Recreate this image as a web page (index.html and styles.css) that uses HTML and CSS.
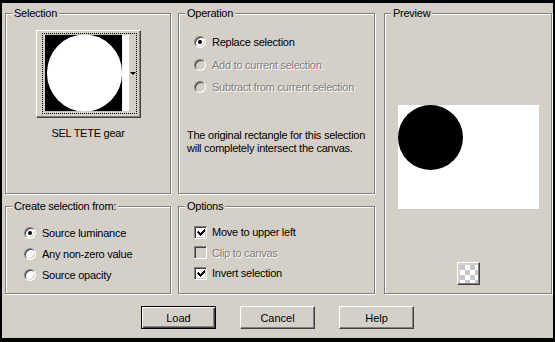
FILE: index.html
```html
<!DOCTYPE html>
<html lang="en">
<head>
	<meta charset="UTF-8">
	<title>Load Selection From Alpha</title>
	<link rel="stylesheet" href="styles.css">
</head>
<body>
	<div class="dialog">
		<div class="groups">
			<fieldset class="group sel_box">
				<legend>Selection</legend>
				<div class="thumb">
					<div class="focus">
						<svg class="thumb_img" width="86" height="78" viewBox="0 0 86 78">
							<rect x="0" y="0" width="79" height="78" fill="#000"/>
							<rect x="79" y="0" width="7" height="78" fill="#fff"/>
							<ellipse cx="40.5" cy="39" rx="38.5" ry="39.5" fill="#fff"/>
						</svg>
						<span class="arrow"></span>
					</div>
				</div>
				<div class="sel_name">SEL TETE gear</div>
			</fieldset>

			<fieldset class="group op_box">
				<legend>Operation</legend>
				<div class="rows op_rows">
					<label class="row"><span class="radio on"></span>Replace selection</label>
					<label class="row off"><span class="radio"></span>Add to current selection</label>
					<label class="row off"><span class="radio"></span>Subtract from current selection</label>
				</div>
				<p class="note">The original rectangle for this selection<br>will completely intersect the canvas.</p>
			</fieldset>

			<fieldset class="group preview_box">
				<legend>Preview</legend>
				<div class="preview">
					<span class="dot"></span>
				</div>
				<div class="checker_btn"><span class="checker"></span></div>
			</fieldset>

			<fieldset class="group from_box">
				<legend>Create selection from:</legend>
				<div class="rows from_rows">
					<label class="row"><span class="radio on"></span>Source luminance</label>
					<label class="row"><span class="radio"></span>Any non-zero value</label>
					<label class="row"><span class="radio"></span>Source opacity</label>
				</div>
			</fieldset>

			<fieldset class="group opt_box">
				<legend>Options</legend>
				<div class="rows opt_rows">
					<label class="row"><span class="check on"><svg width="9" height="9" viewBox="0 0 9 9"><path d="M1 3h1v1h1v1h1v-1h1v-1h1v-1h1v-1h1v3h-1v1h-1v1h-1v1h-1v1h-1v-1h-1v-1h-1v-1h-1z" fill="#000"/></svg></span>Move to upper left</label>
					<label class="row off"><span class="check"></span>Clip to canvas</label>
					<label class="row"><span class="check on"><svg width="9" height="9" viewBox="0 0 9 9"><path d="M1 3h1v1h1v1h1v-1h1v-1h1v-1h1v-1h1v3h-1v1h-1v1h-1v1h-1v1h-1v-1h-1v-1h-1v-1h-1z" fill="#000"/></svg></span>Invert selection</label>
				</div>
			</fieldset>
		</div>

		<div class="buttons">
			<button class="btn default">Load</button>
			<button class="btn">Cancel</button>
			<button class="btn">Help</button>
		</div>
	</div>
</body>
</html>
```

FILE: styles.css
```css
*{margin: 0; padding: 0; box-sizing: border-box;}
body{background: #000;}
.dialog{
	width: 555px;
	height: 342px;
	background: #d4d0c8;
	border-style: solid;
	border-color: #000;
	border-width: 3px 2px 4px 2px;
	padding: 4px 0 0 3px;
	font: 11px "Liberation Sans", Arial, sans-serif;
	letter-spacing: -0.25px;
	color: #000;
}
.groups{
	display: grid;
	grid-template-columns: 166px 197px 170px;
	grid-template-rows: 187px 94px;
	column-gap: 7px;
	row-gap: 6px;
}
.group{
	border: 1px solid #808080;
	box-shadow: inset 1px 1px 0 #fff, 1px 1px 0 #fff;
	min-width: 0;
}
.group legend{
	margin-left: 6px;
	padding: 0 2px;
	line-height: 13px;
	background: #d4d0c8;
}
.preview_box{
	grid-column: 3;
	grid-row: 1 / 3;
	margin-left: 2px;
	display: flex;
	flex-direction: column;
	align-items: center;
}

/* selection thumbnail */
.sel_box{
	display: flex;
	flex-direction: column;
	align-items: center;
	padding-top: 10px;
}
.thumb{
	width: 105px;
	height: 88px;
	border: 1px solid;
	border-color: #fff #404040 #404040 #fff;
	box-shadow: inset -1px -1px 0 #808080;
	padding: 2px 3px 3px 5px;
}
.focus{
	width: 95px;
	height: 81px;
	border: 1px dotted #000;
	padding: 0 0 0 2px;
	display: flex;
	align-items: flex-start;
}
.thumb_img{display: block;}
.arrow{
	width: 0;
	height: 0;
	margin: 38px 0 0 1px;
	border-style: solid;
	border-width: 3px 3px 0 3px;
	border-color: #000 transparent transparent transparent;
}
.sel_name{
	margin-top: 9px;
	line-height: 13px;
}

/* radio and check rows */
.rows{
	display: flex;
	flex-direction: column;
}
.row{
	display: flex;
	align-items: center;
	height: 22.5px;
	white-space: nowrap;
}
.row.off{
	color: #808080;
	text-shadow: 1px 1px 0 #fff;
}
.op_rows{padding: 11px 0 0 15px;}
.from_rows{padding: 9px 0 0 18px;}
.from_rows .row{height: 21px;}
.opt_rows{padding: 9px 0 0 15px;}
.opt_rows .row{height: 20.5px;}

.radio{
	position: relative;
	width: 12px;
	height: 12px;
	margin-right: 6px;
	border-radius: 50%;
	border: 1px solid;
	border-color: #808080 #fff #fff #808080;
	box-shadow: inset 1px 1px 0 #404040, inset -1px -1px 0 #d4d0c8;
	background: #fff;
	flex: none;
}
.row.off .radio{background: #d4d0c8;}
.radio.on::after{
	content: "";
	position: absolute;
	left: 3px;
	top: 3px;
	width: 4px;
	height: 4px;
	border-radius: 50%;
	background: #000;
}
.check{
	width: 13px;
	height: 13px;
	margin-right: 5px;
	border: 1px solid;
	border-color: #808080 #fff #fff #808080;
	box-shadow: inset 1px 1px 0 #404040, inset -1px -1px 0 #d4d0c8;
	background: #fff;
	padding: 1px 0 0 1px;
	display: flex;
	align-items: center;
	justify-content: center;
	flex: none;
}
.check svg{display: block;}
.row.off .check{background: #d4d0c8;}

.note{
	margin: 30px 0 0 8px;
	line-height: 13px;
	white-space: nowrap;
}

/* preview */
.preview{
	width: 141px;
	height: 104px;
	margin-top: 85px;
	background: #fff;
}
.dot{
	display: block;
	width: 65px;
	height: 65px;
	border-radius: 50%;
	background: #000;
}
.checker_btn{
	width: 23px;
	height: 23px;
	margin-top: 53px;
	border: 1px solid;
	border-color: #fff #404040 #404040 #fff;
	box-shadow: inset -1px -1px 0 #808080;
	padding: 2px;
}
.checker{
	display: block;
	width: 18px;
	height: 18px;
	background: repeating-conic-gradient(#fff 0 25%, #c8c8c8 0 50%) 0 0 / 10px 10px;
}

/* buttons */
.buttons{
	display: flex;
	justify-content: center;
	gap: 24px;
	margin: 12px 0 0 -3px;
}
.btn{
	width: 75px;
	height: 23px;
	font: inherit;
	color: #000;
	background: #d4d0c8;
	border: 1px solid;
	border-color: #fff #404040 #404040 #fff;
	box-shadow: inset -1px -1px 0 #808080;
}
.btn.default{
	border-color: #000;
	box-shadow: inset 1px 1px 0 #fff, inset -1px -1px 0 #404040, inset -2px -2px 0 #808080;
}
```
